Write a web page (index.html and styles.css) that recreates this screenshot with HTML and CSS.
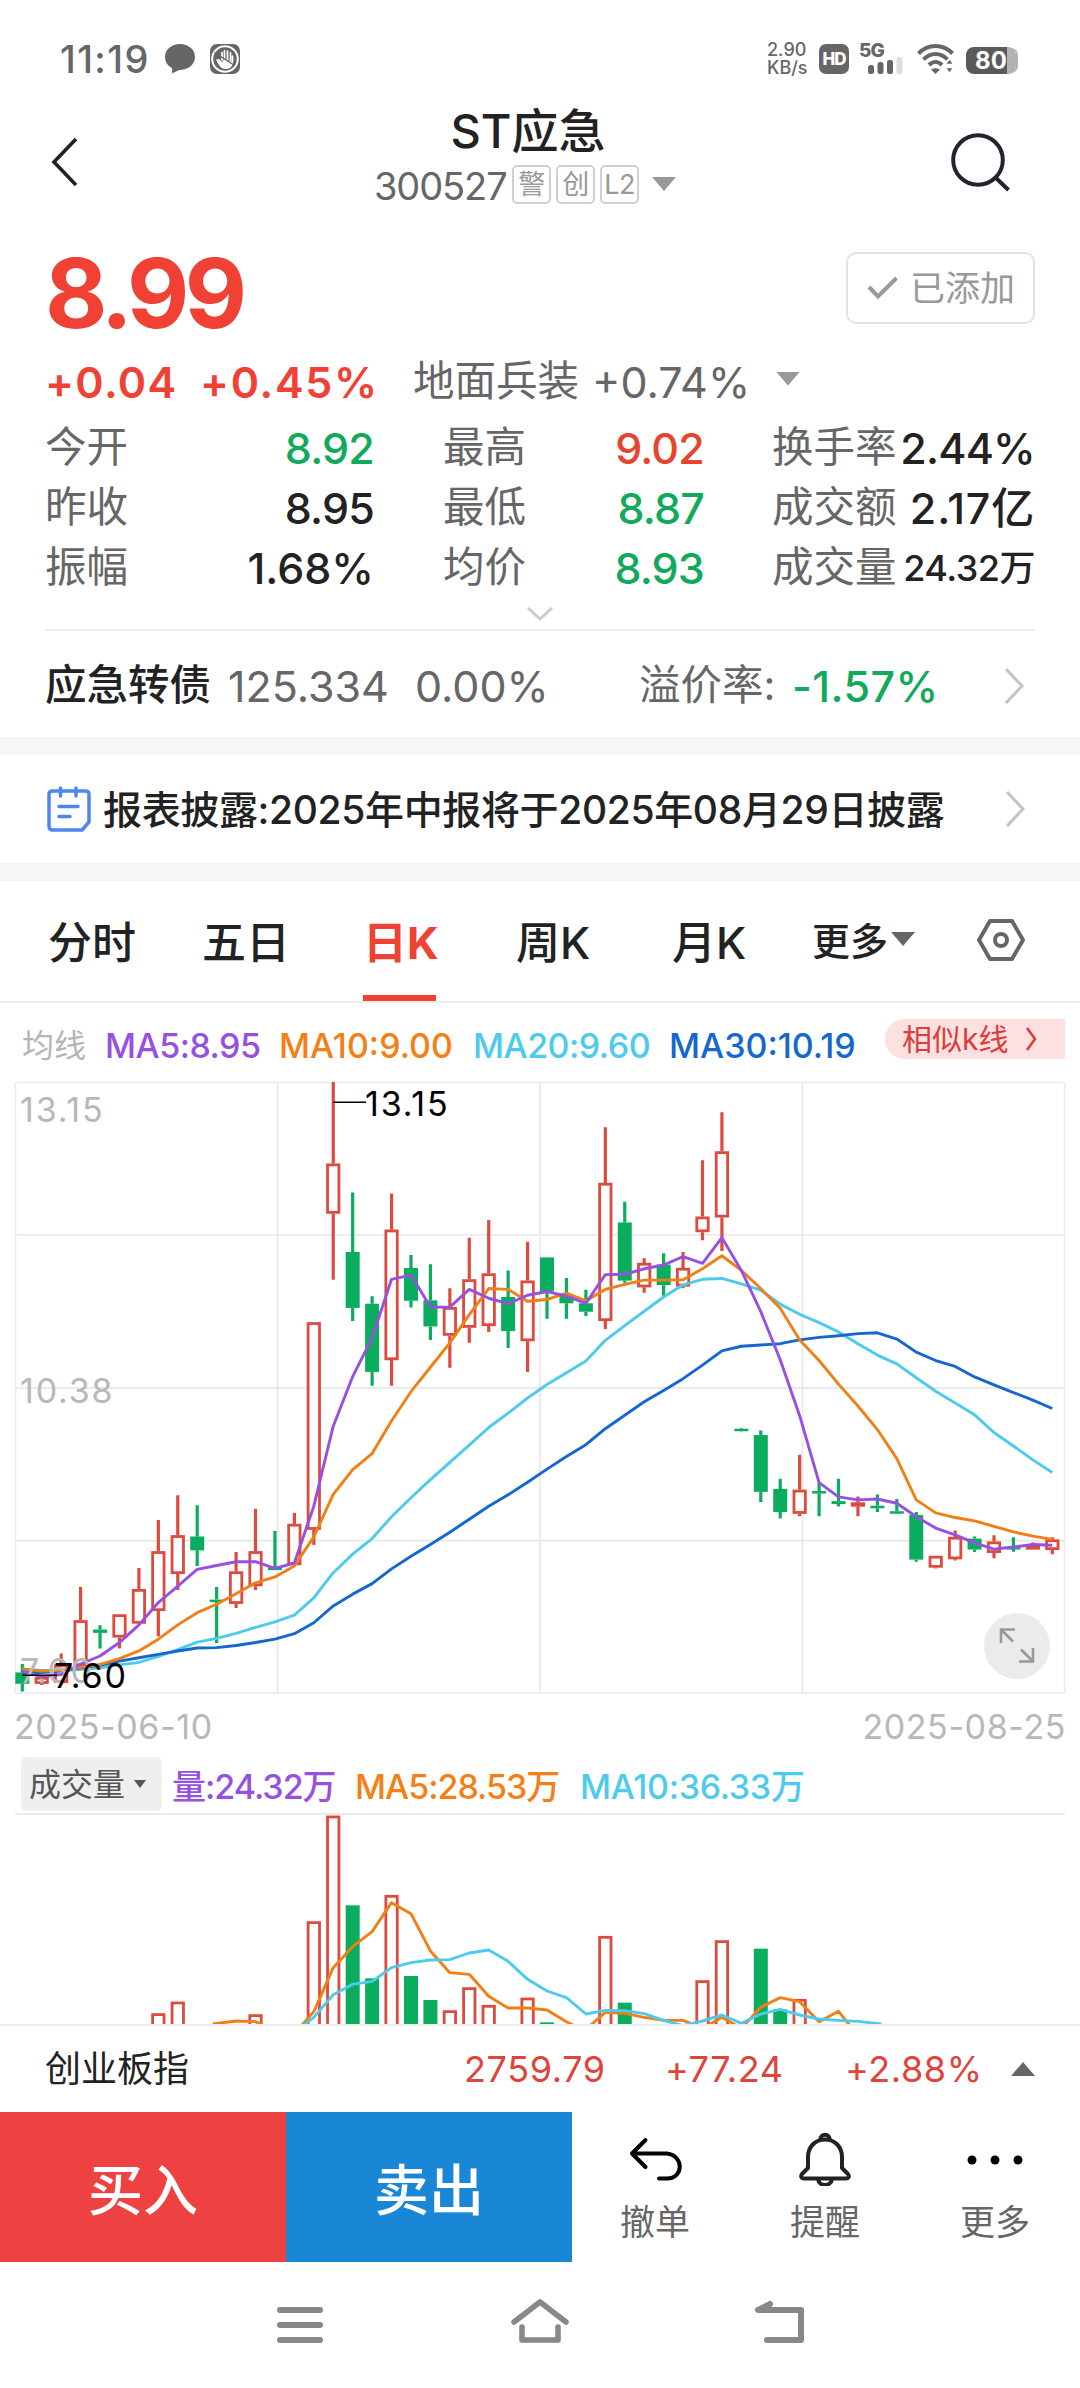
FILE: index.html
```html
<!DOCTYPE html>
<html lang="zh-CN">
<head>
<meta charset="utf-8">
<title>ST应急 300527</title>
<link rel="stylesheet" href="styles.css">
</head>
<body>
<div class="status">
  <span class="clock">11:19</span>
  <svg class="bubble" width="30" height="30" viewBox="0 0 30 30"><path d="M15 0C6.500 0 0 5.500 0 13c0 5 2.800 9 7.200 11.200V29.500L14 26c9 0 16-5.200 16-13C30 5.500 23.500 0 15 0z" fill="#666"/></svg>
  <svg class="hand" width="30" height="30" viewBox="0 0 30 30"><rect width="30" height="30" rx="7" fill="#666"/><circle cx="15" cy="15" r="12.800" fill="none" stroke="#fff" stroke-width="2"/><path d="M12 16V8.500M14.500 16V6.500M17.500 16V7M20.500 17V8.500M22.500 12v6" fill="none" stroke="#fff" stroke-width="1.700" stroke-linecap="round"/><path d="M6 15.500l3-.5 3 3 2-2.500 9 3c0 4-3 6.500-7.500 6.500-4 0-6.500-3-9.500-9.500z" fill="#fff"/><path d="M4.500 8.500l20 13" stroke="#666" stroke-width="1.300"/></svg>
  <div class="speed"><span>2.90</span><span>KB/s</span></div>
  <span class="hd">HD</span>
  <div class="cell"><span>5G</span>
    <svg width="36" height="17" viewBox="0 0 36 17"><g fill="#666"><rect x="0" y="8" width="6" height="9" rx="2.500"/><rect x="9.500" y="5" width="6" height="12" rx="2.500"/><rect x="19" y="3" width="6" height="14" rx="2.500"/></g><rect x="28.500" y="0" width="6" height="17" rx="2.500" fill="#ddd"/></svg>
  </div>
  <svg class="wifi" width="38" height="30" viewBox="0 0 38 30"><g fill="none" stroke="#666" stroke-width="4"><path d="M1.500 9.500C11-.5 26-.5 35.500 9.500"/><path d="M6.500 15.500c7-7.500 17-7.500 24 0"/><path d="M12 21c4-4 9-4 13 0"/></g><path d="M14 25.500q4.500-2.500 9 0L18.500 30z" fill="#666"/><path d="M28 20.500l4.500-6 4.500 6zM28 23.500h9l-4.500 6z" fill="#666" stroke="#fff" stroke-width="1.500"/></svg>
  <div class="battery"><span>80</span></div>
</div>

<header class="header">
  <svg class="back" width="30" height="52" viewBox="0 0 30 52"><path d="M26 3L4 26l22 23" fill="none" stroke="#222" stroke-width="3.600"/></svg>
  <div class="title">
    <h1>ST应急</h1>
    <div class="code"><span class="num">300527</span><span class="chip">警</span><span class="chip">创</span><span class="chip">L2</span><i class="tri"></i></div>
  </div>
  <svg class="search" width="60" height="60" viewBox="0 0 60 60"><circle cx="27" cy="27" r="24.800" fill="none" stroke="#23232f" stroke-width="4"/><path d="M45 45l12.500 12" stroke="#23232f" stroke-width="4"/></svg>
</header>

<section class="quote">
  <div class="price-row">
    <span class="price">8.99</span>
    <div class="added"><svg width="32" height="24" viewBox="0 0 32 24"><path d="M2 11l9 9.500L29.500 2" fill="none" stroke="#999" stroke-width="4"/></svg><span>已添加</span></div>
  </div>
  <div class="change">
    <span class="delta">+0.04</span><span class="pct">+0.45%</span><span class="sector">地面兵装</span><span class="sector-pct">+0.74%</span><i class="tri"></i>
  </div>
  <div class="stats">
    <span>今开</span><b class="down">8.92</b><span>最高</span><b class="up">9.02</b><span>换手率</span><b>2.44%</b>
    <span>昨收</span><b>8.95</b><span>最低</span><b class="down">8.87</b><span>成交额</span><b class="wide">2.17亿</b>
    <span>振幅</span><b class="range">1.68%</b><span>均价</span><b class="down">8.93</b><span>成交量</span><b class="small">24.32万</b>
  </div>
  <div class="expand"><svg width="28" height="16" viewBox="0 0 28 16"><path d="M2 2l12 11L26 2" fill="none" stroke="#ccc" stroke-width="3"/></svg></div>
</section>

<section class="bond">
  <b>应急转债</b><span>125.334</span><span>0.00%</span><span class="label">溢价率:</span><span class="prem">-1.57%</span>
  <svg width="20" height="36" viewBox="0 0 20 36"><path d="M2 1l16 17L2 35" fill="none" stroke="#c4c4c4" stroke-width="3"/></svg>
</section>

<section class="notice">
  <svg width="44" height="46" viewBox="0 0 44 46"><g fill="none" stroke="#4d86ee" stroke-width="3.500" stroke-linecap="round"><path d="M2 8q0-3 4-3h32q4 0 4 3v28l-7 8H6q-4 0-4-4z" stroke-linejoin="round"/><path d="M13.500 2v8M29 2v8M12 20.500h19M12 30.500h11"/></g></svg>
  <span>报表披露:2025年中报将于2025年08月29日披露</span>
  <svg width="20" height="36" viewBox="0 0 20 36"><path d="M2 1l16 17L2 35" fill="none" stroke="#c4c4c4" stroke-width="3"/></svg>
</section>

<nav class="tabs">
  <span>分时</span><span>五日</span><span class="active">日K</span><span>周K</span><span>月K</span>
  <span class="more">更多<i class="tri"></i></span>
  <svg width="48" height="42" viewBox="0 0 48 42"><path d="M13 2h22l11 19-11 19H13L2 21z" fill="none" stroke="#666" stroke-width="4" stroke-linejoin="round"/><circle cx="24" cy="21" r="6" fill="none" stroke="#666" stroke-width="4"/></svg>
</nav>

<div class="ma">
  <span class="name">均线</span><span class="purple tight">MA5:8.95</span><span class="orange">MA10:9.00</span><span class="cyan tight">MA20:9.60</span><span class="blue">MA30:10.19</span>
  <div class="similar">相似k线<svg width="12" height="24" viewBox="0 0 12 24"><path d="M2 1l8 11-8 11" fill="none" stroke="#dc3c3c" stroke-width="2.600"/></svg></div>
</div>
<svg id="kline" class="kline" width="1080" height="630" viewBox="0 1070 1080 630"></svg>
<div class="dates"><span>2025-06-10</span><span>2025-08-25</span></div>
<div class="vol-head">
  <span class="picker">成交量<i class="tri"></i></span><span class="purple">量:24.32万</span><span class="orange">MA5:28.53万</span><span class="cyan">MA10:36.33万</span>
</div>
<svg id="volume" class="volume" width="1080" height="211" viewBox="0 1813 1080 211"></svg>

<div class="index">
  <b>创业板指</b><span>2759.79</span><span>+77.24</span><span>+2.88%</span><i class="tri"></i>
</div>
<div class="actions">
  <div class="buy">买入</div><div class="sell">卖出</div>
  <div class="tool"><svg width="56" height="56" viewBox="0 0 56 56"><path d="M18.500 10L5 23.500 18.500 37M6 23.500h34c17 2 17 25 0 25H32" fill="none" stroke="#000" stroke-width="4" stroke-linecap="round" stroke-linejoin="round"/></svg><span>撤单</span></div>
  <div class="tool"><svg width="56" height="56" viewBox="0 0 56 56"><g fill="none" stroke="#222" stroke-width="4" stroke-linejoin="round"><path d="M11 38V27c0-10 7-17.500 17-17.500S45 17 45 27v11l6 6c2 3 0 4.500-2 4.500H7c-2 0-4-1.500-2-4.500z"/><path d="M23.500 10c-1-7 10-7 9 0M21 49c1 8 13 8 14 0"/></g></svg><span>提醒</span></div>
  <div class="tool"><svg width="56" height="56" viewBox="0 0 56 56"><circle cx="5" cy="30" r="4.500"/><circle cx="28" cy="30" r="4.500"/><circle cx="51" cy="30" r="4.500"/></svg><span>更多</span></div>
</div>
<div class="sysnav">
  <svg width="60" height="50" viewBox="0 0 60 50"><path d="M10 12h40M10 27h40M10 42h40" stroke="#888" stroke-width="6" stroke-linecap="round"/></svg>
  <svg width="60" height="50" viewBox="0 0 60 50"><path d="M4 24L30 4l26 20M12 29v13h36V29" fill="none" stroke="#888" stroke-width="5.600" stroke-linecap="round" stroke-linejoin="round"/></svg>
  <svg width="60" height="50" viewBox="0 0 60 50"><path d="M20 6L8 12h43v30H17" fill="none" stroke="#888" stroke-width="6" stroke-linecap="round" stroke-linejoin="round"/></svg>
</div>
<script src="chart.js"></script>
</body>
</html>
```
FILE: styles.css
```css
* { box-sizing: border-box; }
body {
  margin: 0;
  width: 1080px;
  background: #fff;
  color: #222;
  font-family: Inter, "Noto Sans CJK SC", sans-serif;
  line-height: 1;
  white-space: nowrap;
}
svg { display: block; flex: none; }
b { font-weight: 500; }
.tri {
  display: block;
  width: 24px;
  height: 14px;
  background: #999;
  clip-path: polygon(0 0, 100% 0, 50% 100%);
}
.up { color: #e8432f; }
.down { color: #11a95b; }
.purple { color: #9750e0; }
.orange { color: #f57f17; }
.cyan { color: #4dcbec; }
.blue { color: #1467ce; }

/* status bar */
.status { display: flex; align-items: center; height: 118px; padding-left: 60px; color: #666; }
.clock { width: 105px; font-size: 38px; font-weight: 500; letter-spacing: 1.4px; }
.hand { margin-left: 15px; }
.speed { display: flex; flex-direction: column; width: 52px; margin-left: 527px; font-size: 18px; line-height: 18px; font-weight: 500; }
.hd { width: 30px; height: 30px; border-radius: 7px; background: #666; color: #fff; font-size: 17px; line-height: 30px; font-weight: 800; letter-spacing: -1px; text-align: center; }
.cell { width: 56px; height: 30px; margin-left: 10px; }
.cell span { display: block; height: 13px; font-size: 19px; line-height: 14px; font-weight: 800; letter-spacing: -1px; }
.cell svg { margin-left: 9px; }
.wifi { margin-left: 2px; }
.battery { width: 50px; height: 27px; margin-left: 11px; margin-top: 3px; border-radius: 8px; background: linear-gradient(90deg, #5a5a5a 41px, #b2b2b2 41px); color: #fff; font-size: 24px; line-height: 28px; font-weight: 700; text-align: center; box-shadow: 3px 0 0 -1px #b2b2b2; }

/* title bar */
.header { display: flex; height: 118px; padding-left: 50px; }
.back { margin-top: 18px; }
.title { width: 544px; margin-left: 176px; text-align: center; }
.title h1 { margin: 0; font-size: 47px; line-height: 26px; font-weight: 500; }
.code { display: flex; align-items: center; height: 38px; margin-top: 21px; padding-left: 118px; color: #666; }
.code .num { width: 138px; font-size: 38px; line-height: 38px; padding-top: 3px; letter-spacing: -1.1px; text-align: left; }
.chip { width: 39px; height: 39px; margin-right: 5px; border: 2px solid #d0d0d0; border-radius: 5px; color: #999; font-size: 27px; line-height: 35px; text-align: center; letter-spacing: -0.5px; }
.code .tri { margin-left: 8px; }
.search { margin: 15px 0 0 151px; }

/* quote */
.quote { height: 395px; padding: 0 45px; }
.price-row { display: flex; justify-content: space-between; height: 117px; padding-top: 16px; }
.price { font-size: 96px; line-height: 82px; font-weight: 700; color: #f04134; letter-spacing: -4.6px; }
.added { display: flex; align-items: center; gap: 11px; width: 189px; height: 72px; padding-left: 19px; border: 2px solid #e3e3e3; border-radius: 10px; color: #999; font-size: 35px; }
.change { display: grid; grid-template-columns: 155px 213px 179px 184px 24px; align-items: center; height: 56px; margin-top: 1px; font-size: 43px; color: #666; }
.delta, .pct { color: #f04134; font-weight: 600; }
.delta { letter-spacing: 1.4px; }
.pct { letter-spacing: 1.7px; }
.sector { font-size: 41.5px; }
.change .tri { margin-top: -7px; }
.stats { display: grid; grid-template-columns: 120px 209px 190px 140px 200px 131px; grid-auto-rows: 60px; align-items: center; margin-top: 8px; font-size: 43px; }
.stats span { color: #666; font-size: 41.5px; }
.stats span:nth-child(6n + 3) { margin-left: 69px; }
.stats span:nth-child(6n + 5) { margin-left: 68px; }
.stats b { font-weight: 500; justify-self: end; letter-spacing: -0.8px; }
.stats .wide { letter-spacing: 0.8px; }
.stats .range { letter-spacing: 0; }
.stats .small { font-size: 36px; letter-spacing: -0.5px; }
.expand { display: flex; justify-content: center; height: 33px; padding-top: 8px; border-bottom: 2px solid #efefef; }

/* bond */
.bond { display: grid; grid-template-columns: 183px 187px 224px 153px 212px 20px; align-items: center; height: 124px; padding: 6px 45px 2px; border-bottom: 18px solid #f6f6f8; font-size: 43px; color: #666; }
.bond b, .bond .label { font-size: 41.5px; }
.bond b { color: #222; }
.prem { color: #11a95b; font-weight: 500; letter-spacing: 0.4px; }

.notice { display: grid; grid-template-columns: 56px 902px 20px; align-items: center; height: 126px; padding-left: 47px; border-bottom: 18px solid #f6f6f8; font-size: 39px; font-weight: 500; letter-spacing: -0.35px; }

/* tabs */
.tabs { display: grid; grid-template-columns: 154px 161px 153px 156px 140px 165px 48px; align-items: center; height: 122px; padding-left: 48px; border-bottom: 2px solid #ececee; font-size: 44px; font-weight: 500; }
.tabs > span { line-height: 124px; height: 120px; }
.tabs .active { width: 73px; color: #ee4234; font-weight: 700; background: linear-gradient(#ee4234, #ee4234) bottom / 100% 6px no-repeat; }
.tabs .more { display: flex; align-items: center; gap: 3px; font-size: 38px; }
.more .tri { background: #666; margin-top: -4px; }
.tabs svg { margin-top: -2px; }

/* moving-average legend */
.ma { display: grid; grid-template-columns: 83px 174px 194px 196px 216px 180px; height: 67px; padding-left: 22px; line-height: 85px; font-size: 34px; font-weight: 500; }
.ma .tight { letter-spacing: -0.5px; }
.ma .name { color: #b5b5b5; font-size: 32px; font-weight: 400; }
.similar { display: flex; align-items: center; gap: 17px; width: 180px; height: 40px; margin-top: 16px; padding-left: 17px; border-radius: 20px 0 0 20px; background: #ffe0e0; color: #dc3c3c; font-size: 30px; line-height: 40px; font-weight: 400; }

.kline text { font-size: 34px; font-family: Inter, sans-serif; letter-spacing: 1.8px; }
.dates { display: flex; justify-content: space-between; height: 54px; padding: 0 14px; color: #b8b8b8; font-size: 34px; line-height: 53px; letter-spacing: 0.6px; }
.vol-head { display: grid; grid-template-columns: 151px 183px 225px auto; justify-content: start; height: 59px; padding: 3px 0 0 21px; font-size: 34px; line-height: 59px; font-weight: 500; }
.vol-head > span { letter-spacing: -1px; }
.vol-head .cyan { letter-spacing: -0.3px; }
.vol-head .picker { display: flex; align-items: center; gap: 9px; width: 141px; height: 54px; padding-left: 8px; border-radius: 6px; background: #efefef; color: #555; font-size: 32px; font-weight: 400; letter-spacing: 0; }
.picker .tri { width: 12px; height: 8px; background: #555; }

/* footer */
.index { display: grid; grid-template-columns: 419px 201px 180px 166px 24px; align-items: center; height: 88px; padding-left: 45px; border-top: 2px solid #ececee; color: #e0433a; font-size: 36px; letter-spacing: 0.6px; }
.index b { color: #222; font-size: 36px; font-weight: 400; letter-spacing: 0; }
.index .tri { background: #666; transform: scaleY(-1); }
.actions { display: flex; height: 150px; }
.buy, .sell { width: 286px; color: #fff; font-size: 55px; line-height: 156px; font-weight: 500; text-align: center; }
.buy { background: #ee4142; }
.sell { background: #1a86d6; }
.tool { display: flex; flex-direction: column; align-items: center; width: 170px; padding-top: 18px; color: #666; font-size: 35px; }
.actions .tool:nth-child(3) { margin-left: -2px; }
.tool span { margin-top: 19px; }
.sysnav { display: flex; justify-content: space-between; height: 126px; padding: 36px 270px 0; }
```
FILE: chart.js
```js
const SVG = "http://www.w3.org/2000/svg";
const RED = "#dd4a3e", GREEN = "#0aac5e";
const x = i => 22.3 + i * 19.434;

function add(parent, tag, attrs, text) {
  const node = document.createElementNS(SVG, tag);
  for (const key in attrs) node.setAttribute(key, attrs[key]);
  if (text) node.textContent = text;
  parent.appendChild(node);
}
function line(parent, points, color) {
  add(parent, "polyline", { points: points.map(p => p.join(",")).join(" "), fill: "none", stroke: color, "stroke-width": 2.9, "stroke-linejoin": "round" });
}

/* price chart: high, body top, body bottom, low in plot units */
const y = v => 1060 + v * 0.42092;
const candles = `g1435,1455,1482,1500 r1462,1466,1482,1485 r1410,1436,1480,1480 r1252,1331,1440,1440 g1343,1353,1361,1398
r1317,1317,1372,1398 r1207,1257,1339,1339 r1093,1167,1309,1369 r1034,1129,1221,1259 g1058,1132,1165,1202
g1252,1282,1287,1385 r1169,1215,1292,1302 r1066,1167,1250,1259 g1119,1206,1211,1211 r1076,1102,1200,1200
r623,623,1116,1152 r52,246,365,522 g315,456,589,620 g561,579,741,774 r317,403,713,774
g463,494,572,588 g485,571,633,665 r542,587,655,731 r422,521,636,672 r380,507,632,646
g500,563,644,684 r432,524,668,741 g469,469,550,615 g518,560,578,615 g546,578,598,608
r160,292,620,639 g337,386,524,529 r471,482,540,553 g459,486,535,560 r456,494,538,542
r238,372,409,428 r124,217,374,454 g874,876,881,882 g880,891,1026,1050 g995,1019,1074,1089
r938,1021,1078,1084 g1004,1024,1030,1084 g995,1048,1055,1061 r1037,1051,1061,1084 g1032,1059,1065,1074
g1043,1072,1078,1078 g1074,1081,1187,1192 r1178,1178,1206,1208 r1118,1133,1186,1189 g1132,1137,1163,1169
r1129,1144,1171,1184 g1134,1157,1162,1168 r1146,1153,1163,1163 r1134,1139,1164,1174`.split(/\s+/);

const averages = {
  "#4dcbec": [1447,1450,1450,1448,1444,1437,1431,1417,1401,1383,1374,1362,1348,1335,1319,1278,1218,1174,1137,1085,1040,997,956,915,873,839,803,771,743,715,666,631,597,563,534,521,519,532,547,580,604,624,646,674,701,722,755,787,815,843,885,917,950,980],
  "#1467ce": [1455,1455,1452,1444,1438,1428,1420,1412,1404,1397,1396,1391,1384,1376,1363,1337,1297,1269,1244,1209,1179,1151,1122,1091,1060,1033,1003,972,942,914,876,844,812,785,757,725,691,680,677,674,665,659,655,650,648,663,694,714,728,753,772,790,808,828],
  "#f07f16": [1447,1452,1450,1443,1436,1422,1404,1376,1342,1313,1293,1268,1242,1228,1202,1133,1032,973,935,857,788,730,672,605,543,545,573,569,554,572,545,533,523,523,522,496,465,500,543,590,665,714,770,822,878,947,1045,1076,1087,1095,1108,1121,1131,1139],
  "#9750e0": [1452,1465,1460,1435,1416,1384,1342,1289,1250,1210,1201,1192,1192,1208,1195,1060,870,752,660,521,511,587,587,545,566,579,559,550,561,578,510,509,496,487,467,483,422,500,598,712,845,1004,1038,1045,1043,1053,1085,1112,1128,1147,1162,1157,1151,1153]
};

const k = document.getElementById("kline");
add(k, "rect", { x: 15.5, y: 1082.5, width: 1049, height: 610.5, fill: "none", stroke: "#ececec", "stroke-width": 1.5 });
add(k, "path", { d: "M16 1234.7H1064M16 1387.9H1064M16 1540.6H1064M277.500 1083V1693M540 1083V1693M802.500 1083V1693", stroke: "#e8e8e8", "stroke-width": 1.6 });

candles.forEach((item, i) => {
  const [high, top, bottom, low] = item.slice(1).split(",").map(v => y(+v));
  const up = item[0] === "r", color = up ? RED : GREEN;
  add(k, "path", { d: `M${x(i)} ${high}V${top}M${x(i)} ${bottom}V${low}`, stroke: color, "stroke-width": 3.2 });
  if (up) add(k, "rect", { x: x(i) - 5.7, y: top + 1.3, width: 11.4, height: Math.max(bottom - top - 2.6, 1), fill: "#fff", stroke: color, "stroke-width": 2.8 });
  else add(k, "rect", { x: x(i) - 7, y: top, width: 14, height: Math.max(bottom - top, 2.5), fill: color });
});
for (const color in averages) line(k, averages[color].map((v, i) => [x(i), y(v)]), color);

[["13.15", 20, 1122], ["10.38", 20, 1403], ["7.60", 20, 1683]].forEach(([t, tx, ty]) => add(k, "text", { x: tx, y: ty, fill: "#b8b8b8" }, t));
add(k, "path", { d: "M333 1102.300H366M22 1675.300H57", stroke: "#000", "stroke-width": 1.6 });
add(k, "text", { x: 365, y: 1115.5 }, "13.15");
add(k, "text", { x: 54, y: 1688 }, "7.60");
add(k, "circle", { cx: 1017, cy: 1646, r: 33, fill: "#ebebeb" });
add(k, "path", { d: "M1015 1629.500H1001V1643M1002 1630.500L1013 1641.500M1019 1661.500H1033V1648M1032 1660.500L1021 1649.500", fill: "none", stroke: "#999", "stroke-width": 2.6 });

/* volume chart */
const v = document.getElementById("volume");
const vy = n => 1700 + n / 3;
add(v, "path", { d: "M15 1814H1065", stroke: "#ebebeb", "stroke-width": 2 });
const bars = { 7: "r940", 8: "r905", 12: "r943", 15: "r664", 16: "r347", 17: "g616", 18: "g835", 19: "r585", 20: "g828", 21: "g900", 22: "r931", 23: "r862", 24: "r915", 26: "r893", 27: "g967", 30: "r708", 31: "g908", 35: "r841", 36: "r721", 38: "g746", 39: "g928", 40: "r897" };
for (const i in bars) {
  const top = vy(+bars[i].slice(1));
  if (bars[i][0] === "r") add(v, "rect", { x: x(+i) - 5.7, y: top + 1.3, width: 11.4, height: 240, fill: "#fff", stroke: RED, "stroke-width": 2.8 });
  else add(v, "rect", { x: x(+i) - 7, y: top, width: 14, height: 240, fill: GREEN });
}
const at = list => list.map(([i, n]) => [x(i), vy(n)]);
line(v, at([[9.8,972],[11,963],[12,965],[12.4,975]]), "#f07f16");
line(v, at([[14.4,975],[15,935],[16,803],[17,740],[18,695],[19,608],[20,641],[21,753],[22,818],[23,823],[24,889],[25,924],[26,924],[27,930],[28,965],[28.5,980]]), "#f07f16");
line(v, at([[29.2,978],[30,937],[31,940],[32,952],[33,961],[34,961],[35,985],[36,952],[37,985],[38,922],[39,893],[40,905],[41,965],[42,934],[42.7,985]]), "#f07f16");
line(v, at([[14.4,980],[15,952],[16,884],[17,853],[18,844],[19,803],[20,788],[21,780],[22,779],[23,759],[24,750],[25,784],[26,838],[27,873],[28,893],[29,942],[30,931],[31,932],[32,941],[33,961],[34,977],[35,963],[36,945],[37,970],[38,942],[39,928],[40,945],[41,957],[42,961],[43,964],[44.2,972]]), "#4dcbec");
```
